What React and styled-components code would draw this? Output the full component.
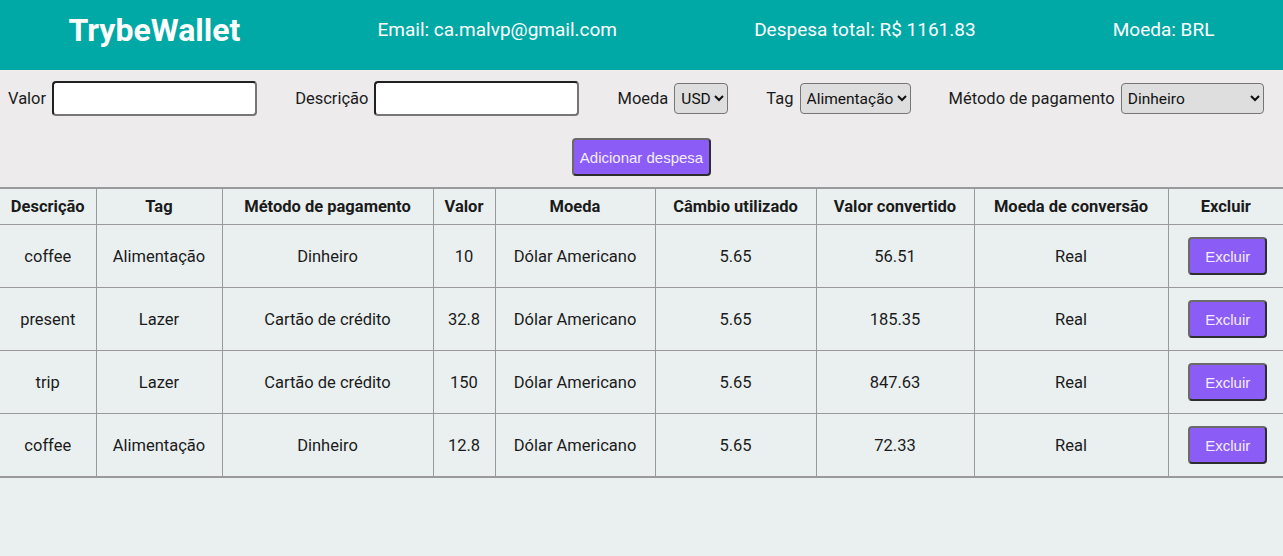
import React from "react";
import styled, { createGlobalStyle } from "styled-components";

const GlobalStyle = createGlobalStyle`
  html, body { margin: 0; padding: 0; }
  body {
    background: #eaf0f0;
    font-family: "Roboto", "Liberation Sans", sans-serif;
    color: #1b1b1b;
  }
`;

const Header = styled.header`
  height: 70px;
  background: #00a9a6;
  color: #ffffff;
  display: flex;
  align-items: center;
  justify-content: space-around;
  padding-bottom: 11px;
  box-sizing: border-box;
`;

const Logo = styled.h1`
  margin: 0;
  font-size: 32px;
  font-weight: 700;
`;

const HeaderInfo = styled.span`
  font-size: 19px;
  font-weight: 400;
`;

const FormArea = styled.section`
  background: #edebec;
  padding: 11px 0;
  display: flex;
  flex-direction: column;
  align-items: center;
  gap: 22px;
`;

const FormRow = styled.div`
  align-self: stretch;
  display: flex;
  align-items: center;
  gap: 38px;
  height: 35px;
  padding-left: 8px;
`;

const Field = styled.label`
  display: flex;
  align-items: center;
  gap: 6px;
  font-size: 16.5px;
`;

const TextInput = styled.input`
  width: ${(p) => p.$w}px;
  height: 35px;
  box-sizing: border-box;
  border: 2px inset #767676;
  border-radius: 4px;
  background: #fff;
`;

const Select = styled.select`
  width: ${(p) => (p.$w ? `${p.$w}px` : "auto")};
  height: 31px;
  box-sizing: border-box;
  font-family: "Roboto", sans-serif;
  font-size: 15.5px;
  color: #111;
  background: #dedede;
  border: 1px solid #767676;
  border-radius: 4px;
  padding: 0 0 0 2px;
`;

const PurpleButton = styled.button`
  background: #8b5cf6;
  color: #f3eeff;
  border: 2px solid #2e2e30;
  border-top-color: #6a6a6a;
  border-left-color: #6a6a6a;
  border-radius: 4px;
  font-family: "Liberation Sans", Arial, sans-serif;
  font-size: 15px;
  height: 38px;
  padding: 0 ${(p) => p.$px || 6}px;
  cursor: pointer;
`;

const Table = styled.table`
  width: 100%;
  border-collapse: collapse;
  table-layout: fixed;
  border-top: 2px solid #9a9a9a;
  border-bottom: 2px solid #9a9a9a;
`;

const Th = styled.th`
  height: 35px;
  padding: 0;
  font-size: 16.5px;
  font-weight: 700;
  border: 1px solid #9a9a9a;
  border-top: none;
  &:first-child { border-left: none; }
  &:last-child { border-right: none; }
`;

const Td = styled.td`
  height: 62px;
  padding: 0;
  text-align: center;
  font-size: 16.5px;
  border: 1px solid #9a9a9a;
  &:first-child { border-left: none; }
  &:last-child { border-right: none; padding-left: 4px; }
`;

const cols = [96, 126, 211, 62, 160, 161, 158, 194, 115];
const headers = [
  "Descrição",
  "Tag",
  "Método de pagamento",
  "Valor",
  "Moeda",
  "Câmbio utilizado",
  "Valor convertido",
  "Moeda de conversão",
  "Excluir",
];

const expenses = [
  ["coffee", "Alimentação", "Dinheiro", "10", "Dólar Americano", "5.65", "56.51", "Real"],
  ["present", "Lazer", "Cartão de crédito", "32.8", "Dólar Americano", "5.65", "185.35", "Real"],
  ["trip", "Lazer", "Cartão de crédito", "150", "Dólar Americano", "5.65", "847.63", "Real"],
  ["coffee", "Alimentação", "Dinheiro", "12.8", "Dólar Americano", "5.65", "72.33", "Real"],
];

export default function App() {
  return (
    <>
      <GlobalStyle />
      <Header>
        <Logo>TrybeWallet</Logo>
        <HeaderInfo>Email: ca.malvp@gmail.com</HeaderInfo>
        <HeaderInfo>Despesa total: R$ 1161.83</HeaderInfo>
        <HeaderInfo>Moeda: BRL</HeaderInfo>
      </Header>
      <FormArea>
        <FormRow>
          <Field>
            Valor
            <TextInput $w={205} />
          </Field>
          <Field>
            Descrição
            <TextInput $w={205} />
          </Field>
          <Field>
            Moeda
            <Select defaultValue="USD">
              <option>USD</option>
            </Select>
          </Field>
          <Field>
            Tag
            <Select defaultValue="Alimentação">
              <option>Alimentação</option>
            </Select>
          </Field>
          <Field>
            Método de pagamento
            <Select $w={143} defaultValue="Dinheiro">
              <option>Dinheiro</option>
            </Select>
          </Field>
        </FormRow>
        <PurpleButton type="button" $px={6}>
          Adicionar despesa
        </PurpleButton>
      </FormArea>
      <Table>
        <colgroup>
          {cols.map((w, i) => (
            <col key={i} style={{ width: w }} />
          ))}
        </colgroup>
        <thead>
          <tr>
            {headers.map((h) => (
              <Th key={h}>{h}</Th>
            ))}
          </tr>
        </thead>
        <tbody>
          {expenses.map((row, i) => (
            <tr key={i}>
              {row.map((c, j) => (
                <Td key={j}>{c}</Td>
              ))}
              <Td>
                <PurpleButton type="button" $px={15}>
                  Excluir
                </PurpleButton>
              </Td>
            </tr>
          ))}
        </tbody>
      </Table>
    </>
  );
}
